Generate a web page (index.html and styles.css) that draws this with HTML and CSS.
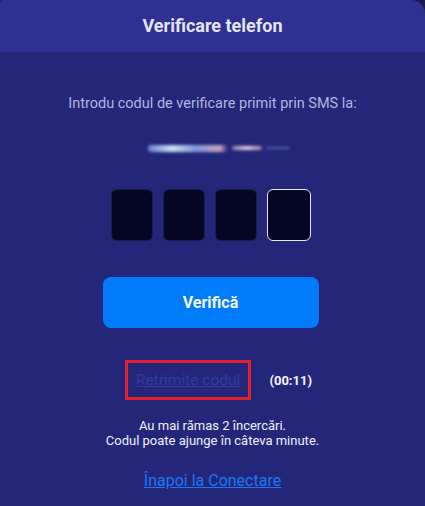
FILE: index.html
```html
<!DOCTYPE html>
<html>
 <head>
  <meta charset="UTF-8">
  <title>Verificare telefon</title>
  <link rel="stylesheet" href="styles.css">
 </head>
 <body>
  <div id="card">
   <div class="head">Verificare telefon</div>
   <div class="body">
    <p class="intro">Introdu codul de verificare primit prin SMS la:</p>
    <div class="phone">
     <span class="b1"></span><span class="b2"></span><span class="b3"></span>
    </div>
    <div class="code">
     <input type="text" maxlength="1">
     <input type="text" maxlength="1">
     <input type="text" maxlength="1">
     <input type="text" maxlength="1" class="on">
    </div>
    <button class="btn">Verifică</button>
    <div class="resend">
     <span class="box"><a href="#">Retrimite codul</a></span>
     <span class="timer">(00:11)</span>
    </div>
    <p class="info">Au mai rămas 2 încercări.<br>Codul poate ajunge în câteva minute.</p>
    <a href="#" class="back">Înapoi la Conectare</a>
   </div>
  </div>
 </body>
</html>
```

FILE: styles.css
```css
*{ margin:0; padding:0; box-sizing:border-box;}

html,body{
 background:#1b1c4e;
 height:100%;
}

#card{
 width:425px;
 height:506px;
 background:#24267a;
 border-radius:3px 14px 0 0;
 overflow:hidden;
 font-family:Roboto,'Liberation Sans',sans-serif;
}

.head{
 height:52px;
 background:#2e3092;
 color:#e3e4f4;
 font-size:18px;
 font-weight:bold;
 text-align:center;
 line-height:51px;
}

.body{
 display:flex;
 flex-direction:column;
 align-items:center;
}

.intro{
 margin-top:43px;
 color:#b3b6dc;
 font-size:14.5px;
 line-height:18px;
}

.phone{
 margin-top:30px;
 margin-left:16px;
 height:12px;
 width:150px;
 position:relative;
 filter:blur(1.5px);
}
.phone span{ position:absolute; display:block; border-radius:3px;}
.phone .b1{ left:2px; top:2px; width:80px; height:7px; background:linear-gradient(90deg,#6c83c8,#c9e2f4 30%,#7f9ad8 60%,#c7a3b8 90%,#24267a);}
.phone .b2{ left:86px; top:3px; width:30px; height:4px; background:linear-gradient(90deg,#8d7fb2,#e6d3e0,#a07c9e);}
.phone .b3{ left:120px; top:4px; width:24px; height:2px; background:#5360ad;}

.code{
 margin-top:34px;
 margin-right:3px;
 display:flex;
 gap:10px;
}
.code input{
 width:42px;
 height:52px;
 background:#050623;
 border:1px solid #1b1d4a;
 border-radius:6px;
 outline:none;
 color:#fff;
 font-size:20px;
 text-align:center;
}
.code input.on{
 width:44px;
 border:1.5px solid #e9e9f2;
}

.btn{
 margin-top:36px;
 margin-right:4px;
 width:216px;
 height:51px;
 border:none;
 border-radius:8px;
 background:#007bfa;
 color:#f4f7ff;
 font-family:inherit;
 font-size:16px;
 font-weight:bold;
 cursor:pointer;
}

.resend{
 margin-top:32px;
 margin-left:12px;
 display:flex;
 align-items:center;
 gap:18px;
}
.resend .box{
 border:3px solid #e3202e;
 padding:7px 8px 8px 8px;
 white-space:nowrap;
}
.resend a{
 color:#2e3ca2;
 font-size:15.5px;
 line-height:16px;
}
.timer{
 color:#f4f5ff;
 font-size:13px;
 font-weight:bold;
}

.info{
 margin-top:18px;
 color:#f0f1fb;
 font-size:13px;
 line-height:15px;
 text-align:center;
}

.back{
 margin-top:23px;
 color:#1a78f2;
 font-size:16px;
}
```
